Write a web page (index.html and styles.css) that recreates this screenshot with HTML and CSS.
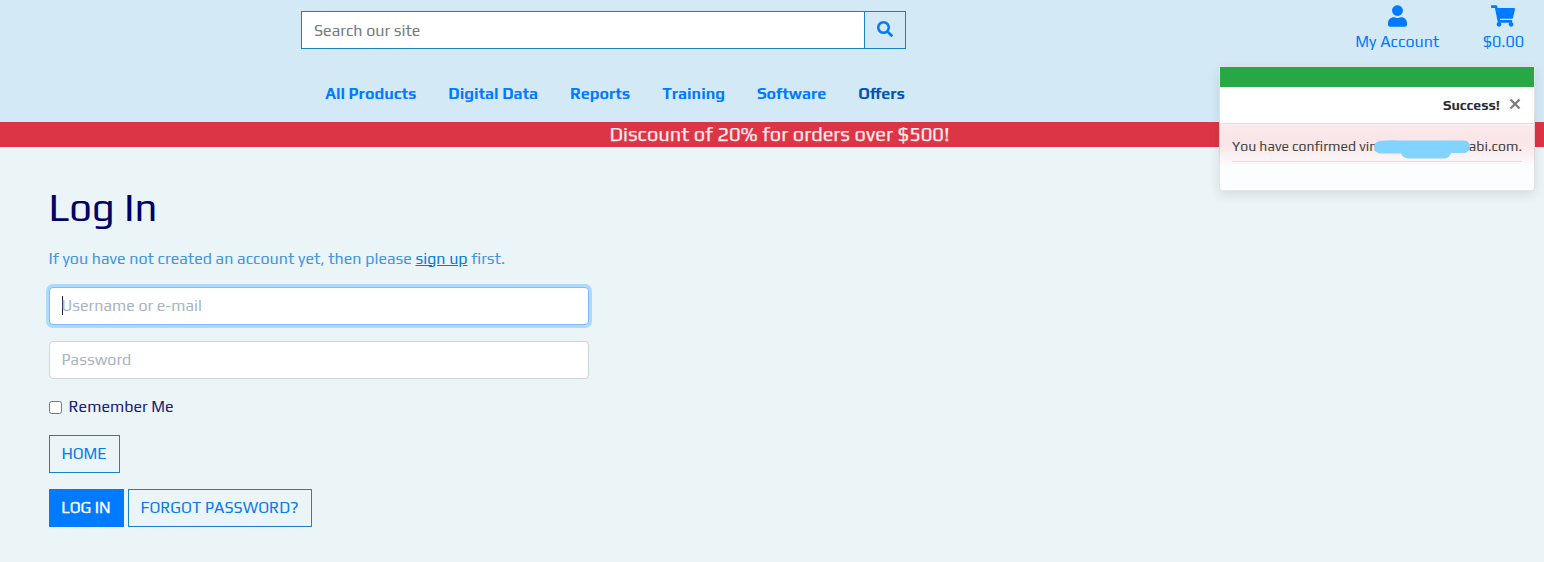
FILE: index.html
```html
<!DOCTYPE html>
<html lang="en">
<head>
<meta charset="utf-8">
<title>Log In</title>
<link rel="stylesheet" href="styles.css">
</head>
<body>
<header class="site-header">
  <form class="search">
    <input class="search-input" type="text" placeholder="Search our site">
    <button class="search-button" type="button" aria-label="Search"><svg width="16" height="16" viewBox="0 0 512 512"><path fill="currentColor" d="M505 442.700L405.300 343c-4.500-4.500-10.600-7-17-7H372c27.600-35.300 44-79.700 44-128C416 93.100 322.900 0 208 0S0 93.100 0 208s93.100 208 208 208c48.300 0 92.700-16.400 128-44v16.300c0 6.400 2.500 12.500 7 17l99.700 99.700c9.400 9.400 24.600 9.400 33.900 0l28.300-28.300c9.400-9.400 9.400-24.600.1-34zM208 336c-70.700 0-128-57.200-128-128 0-70.700 57.200-128 128-128 70.700 0 128 57.200 128 128 0 70.700-57.200 128-128 128z"/></svg></button>
  </form>
  <nav class="main-nav">
    <a class="nav-link">All Products</a>
    <a class="nav-link">Digital Data</a>
    <a class="nav-link">Reports</a>
    <a class="nav-link">Training</a>
    <a class="nav-link">Software</a>
    <a class="nav-link nav-current">Offers</a>
  </nav>
  <div class="user-links">
    <a class="user-link account"><svg width="19" height="22" viewBox="0 0 448 512"><path fill="currentColor" d="M224 256c70.700 0 128-57.300 128-128S294.700 0 224 0 96 57.300 96 128s57.300 128 128 128zm89.600 32h-16.700c-22.200 10.200-46.900 16-72.900 16s-50.600-5.800-72.900-16h-16.700C60.200 288 0 348.200 0 422.400V464c0 26.500 21.500 48 48 48h352c26.500 0 48-21.500 48-48v-41.600c0-74.200-60.200-134.400-134.400-134.400z"/></svg><span>My Account</span></a>
    <a class="user-link cart"><svg width="24" height="22" viewBox="0 0 576 512"><path fill="currentColor" d="M528.100 301.300l47.300-208C578.800 78.300 567.400 64 552 64H159.200l-9.200-44.800C147.800 8 137.900 0 126.500 0H24C10.700 0 0 10.700 0 24v16c0 13.300 10.700 24 24 24h69.900l70.200 343.400C147.300 417.100 136 435.200 136 456c0 30.900 25.100 56 56 56s56-25.100 56-56c0-15.700-6.400-29.800-16.800-40h209.600C430.400 426.200 424 440.300 424 456c0 30.900 25.100 56 56 56s56-25.100 56-56c0-22.200-12.900-41.300-31.600-50.400l5.500-24.300c3.400-15-8-29.300-23.400-29.300H218.100l-6.500-32h293.100c11.200 0 20.900-7.800 23.400-18.700z"/></svg><span>$0.00</span></a>
  </div>
</header>
<div class="banner"><span>Discount of 20% for orders over $500!</span></div>
<main class="login">
  <h1 class="title">Log In</h1>
  <p class="intro">If you have not created an account yet, then please <a class="signup">sign up</a> first.</p>
  <form class="login-form">
    <div class="field field-focused"><span class="caret"></span><span>Username or e-mail</span></div>
    <div class="field"><span>Password</span></div>
    <label class="remember"><input class="check" type="checkbox"><span>Remember Me</span></label>
    <a class="btn btn-home"><span>HOME</span></a>
    <div class="actions">
      <a class="btn btn-primary"><span>LOG IN</span></a>
      <a class="btn btn-forgot"><span>FORGOT PASSWORD?</span></a>
    </div>
  </form>
</main>
<aside class="toast">
  <div class="toast-bar"></div>
  <div class="toast-head"><strong class="toast-title">Success!</strong><svg class="toast-close" width="12" height="12" viewBox="0 0 12 12"><path d="M1.500 1.500l9 9M10.500 1.500l-9 9" fill="none" stroke="#7f7f7f" stroke-width="2.400"/></svg></div>
  <div class="toast-body">
    <div class="toast-message"><span>You have confirmed vin</span><span>abi.com.</span></div>
    <svg class="redaction" width="98" height="19" viewBox="0 0 98 19"><path fill="#80d4ff" d="M7 1Q14 0 26 .5H91Q97 1 97 7Q96 13 90 13H78Q76 18.500 71 18.500H35Q30 18 28 13.500H7Q1 12 1 7Q1 2 7 1z"/></svg>
  </div>
</aside>
</body>
</html>
```
FILE: styles.css
```css
* { box-sizing: border-box; }
body {
  margin: 0;
  height: 562px;
  overflow: hidden;
  background: #ebf4f7;
  color: #000066;
  font: 16px/24px Play, Roboto, "Liberation Sans", sans-serif;
}
.site-header {
  display: grid;
  grid-template-columns: 301px 605px 1fr;
  grid-template-rows: 82px 40px;
  height: 122px;
  background: #d4e9f6;
  color: #007bff;
}
.search { grid-column: 2; display: flex; height: 38px; margin-top: 11px; }
.search-input {
  flex: 1;
  min-width: 0;
  padding: 2px 12px 0;
  border: 1px solid #1a80ca;
  border-radius: 0;
  background: #fff;
  font: inherit;
}
.search-input::placeholder { color: #747b83; opacity: 1; }
.search-button {
  display: flex;
  justify-content: center;
  width: 42px;
  margin-left: -1px;
  padding: 9px 0 0;
  border: 1px solid #1a80ca;
  background: transparent;
  color: #087aef;
}
.main-nav { grid-column: 2; grid-row: 2; display: flex; gap: 32px; padding-left: 24.2px; }
.nav-link { font-weight: 700; white-space: nowrap; }
.nav-current { color: #0056b3; }
.user-links {
  grid-column: 3;
  grid-row: 1;
  display: flex;
  justify-content: flex-end;
  gap: 43.5px;
  padding: 5px 20px 0 0;
}
.user-link { display: flex; flex-direction: column; align-items: center; gap: 3px; }
.banner {
  height: 25px;
  padding-left: 15px;
  background: #dc3545;
  color: #fbe9eb;
  font-size: 20px;
  line-height: 23px;
  text-align: center;
  -webkit-text-stroke: .25px #fbe9eb;
}
.login { padding: 35px 48px; }
.title { margin: 0 0 15px; padding-left: .5px; font-size: 40px; font-weight: 400; line-height: 50px; }
.intro { margin: 0 0 16px; padding-left: .5px; color: #4495df; white-space: nowrap; }
.signup { color: #087bd9; text-decoration: underline; }
.login-form { display: flex; flex-direction: column; align-items: flex-start; padding-left: 1px; }
.field {
  display: flex;
  align-items: center;
  width: 540px;
  height: 38px;
  margin-bottom: 16px;
  padding: 0 11.5px;
  border: 1px solid #ced4da;
  border-radius: 4px;
  background: #fff;
  color: #aab5c2;
}
.field-focused { border-color: #80bdff; box-shadow: 0 0 0 3px #addaff; }
.caret { width: 1px; height: 19px; margin: -1px -1px 0 0; background: #222; }
.remember { display: flex; align-items: center; height: 24px; margin-bottom: 16px; color: #202078; }
.check { width: 13px; height: 13px; margin: 1px 6.5px 0 0; }
.btn {
  display: flex;
  align-items: center;
  justify-content: center;
  height: 38px;
  padding-right: 1px;
  border: 1px solid #1a80ca;
  color: #087bea;
}
.btn-home { width: 71px; margin-bottom: 16px; }
.actions { display: flex; gap: 4px; }
.btn-primary { width: 75px; border-color: #007bff; background: #007bff; color: #fff; -webkit-text-stroke: .3px #fff; }
.btn-forgot { width: 184px; }
.toast {
  position: absolute;
  top: 66px;
  left: 1219px;
  width: 316px;
  height: 125px;
  overflow: hidden;
  border: 1px solid rgba(0, 0, 0, .1);
  border-radius: 1px 1px 4px 4px;
  background: linear-gradient(#fff 45px, #fae8ea 60px, #fae5e7 77px, #fcfdfe 100px);
  box-shadow: 0 4px 12px rgba(0, 0, 0, .1);
  color: #444;
  font-size: 14px;
}
.toast-bar { height: 20px; background: #28a745; }
.toast-head {
  display: flex;
  justify-content: flex-end;
  align-items: center;
  height: 37px;
  padding-right: 13px;
  border-bottom: 1px solid #dedfe0;
  background: #fff;
}
.toast-title { color: #262c32; }
.toast-close { margin: -3px 0 0 9px; }
.toast-body { position: relative; padding: 10px 12px; }
.toast-message { display: flex; justify-content: space-between; height: 28px; border-bottom: 1px solid #dedfe0; }
.redaction { position: absolute; left: 153px; top: 16px; }
```
